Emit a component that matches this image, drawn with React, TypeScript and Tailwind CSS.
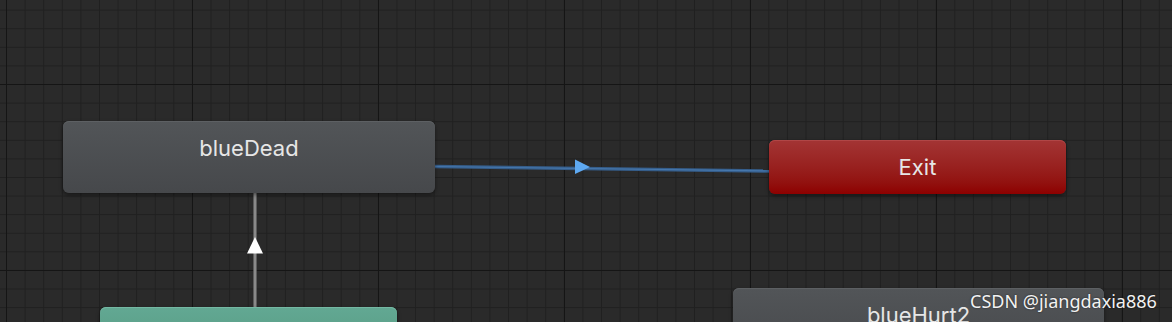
import React from 'react';

interface StateNode {
    id: string;
    label: string;
    x: number;
    y: number;
    w: number;
    h: number;
    kind: 'normal' | 'exit' | 'entry';
}

const nodes: StateNode[] = [
    { id: 'blueDead', label: 'blueDead', x: 63, y: 121, w: 372, h: 72, kind: 'normal' },
    { id: 'exit', label: 'Exit', x: 769, y: 140, w: 297, h: 54, kind: 'exit' },
    { id: 'green', label: '', x: 100, y: 307, w: 297, h: 54, kind: 'entry' },
    { id: 'blueHurt2', label: 'blueHurt2', x: 733, y: 288, w: 371, h: 72, kind: 'normal' },
];

const kindClass = {
    normal: 'bg-gradient-to-b from-[#525558] to-[#46484b] shadow-[inset_0_1px_0_#5d6063,0_2px_4px_rgba(0,0,0,0.45)] pt-[13px]',
    exit: 'bg-gradient-to-b from-[#a33434] to-[#8d0000] shadow-[inset_0_1px_0_#b04646,0_2px_4px_rgba(0,0,0,0.45)] items-center justify-center',
    entry: 'bg-gradient-to-b from-[#62a893] to-[#56997f] shadow-[inset_0_1px_0_#74b8a3,0_2px_4px_rgba(0,0,0,0.45)]',
};

const Node: React.FC<{ node: StateNode }> = ({ node }) => (
    <div
        className={`absolute flex flex-col rounded-[6px] text-center ${kindClass[node.kind]}`}
        style={{ left: node.x, top: node.y, width: node.w, height: node.h }}
    >
        {node.label && (
            <span className="text-[22px] leading-[28px] text-[#e6e6e6] font-['Inter',sans-serif]">{node.label}</span>
        )}
    </div>
);

export default function App() {
    return (
        <div className="relative h-[322px] w-[1172px] overflow-hidden bg-[#2a2a2a] bg-[linear-gradient(to_right,#151515_1px,transparent_1px),linear-gradient(to_bottom,#151515_1px,transparent_1px),linear-gradient(to_right,#202020_1px,transparent_1px),linear-gradient(to_bottom,#202020_1px,transparent_1px)] bg-[size:186px_186px,186px_186px,18.6px_18.6px,18.6px_18.6px] bg-[position:6px_84px]">
            {/* transitions */}
            <svg className="absolute left-0 top-0" width={1172} height={322}>
                <line x1={435} y1={166.5} x2={769} y2={171} stroke="#355d8a" strokeWidth={3.5} />
                <line x1={435} y1={166.5} x2={769} y2={171} stroke="#4677ac" strokeWidth={1.2} />
                <polygon points="575,159.5 590,167 575,174" fill="#5ea9f2" />

                <line x1={255} y1={193} x2={255} y2={307} stroke="#6e6e6e" strokeWidth={3.5} />
                <line x1={255} y1={193} x2={255} y2={307} stroke="#9c9c9c" strokeWidth={1.2} />
                <polygon points="255,237 263,253.5 247,253.5" fill="#ffffff" />
            </svg>

            {nodes.map((n) => (
                <Node key={n.id} node={n} />
            ))}

            {/* watermark */}
            <span className="absolute left-[970px] top-[289px] text-[18px] leading-[24px] text-[#f2f2f2] font-['Noto_Sans',sans-serif] [text-shadow:0_0_2px_rgba(0,0,0,0.6)]">
                CSDN @jiangdaxia886
            </span>
        </div>
    );
}
